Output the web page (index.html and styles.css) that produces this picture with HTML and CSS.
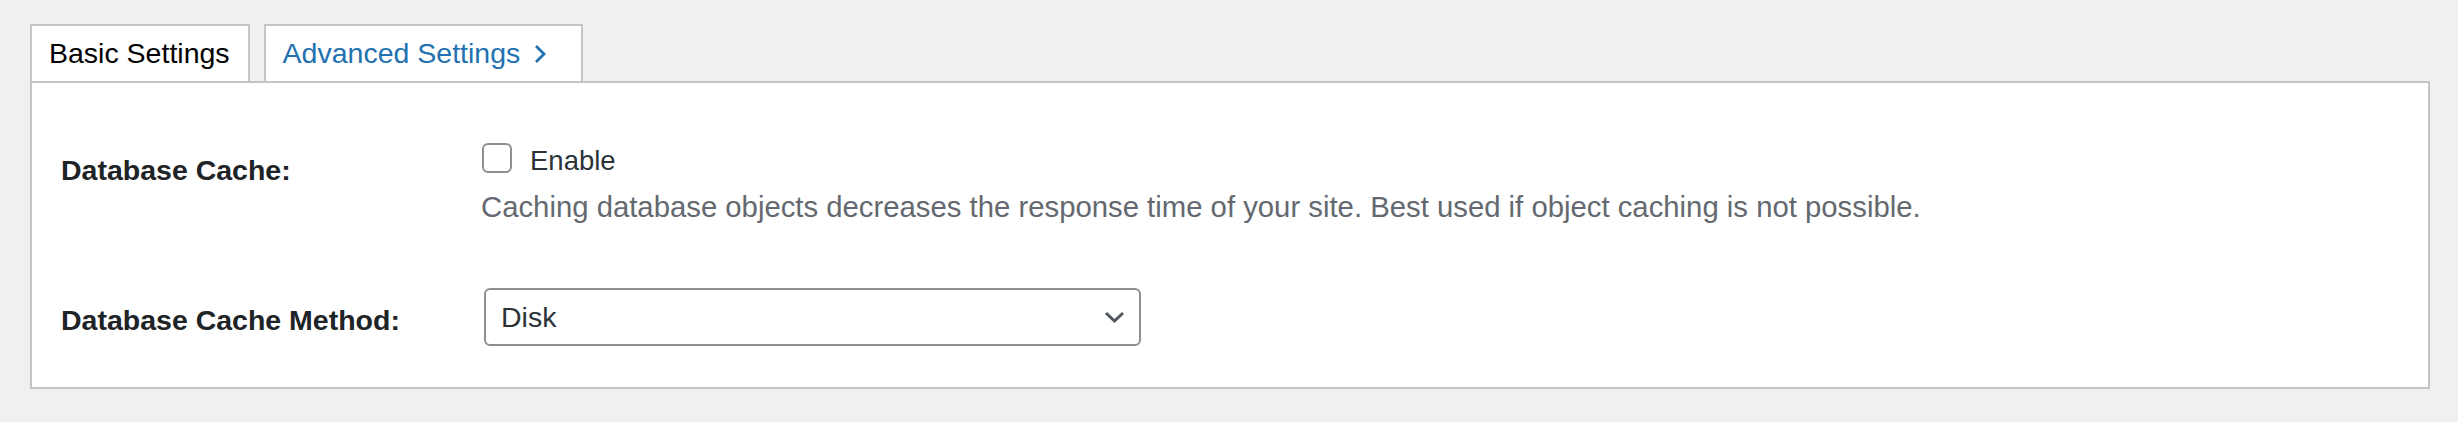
FILE: index.html
```html
<!DOCTYPE html>
<html lang="en">
<head>
    <meta charset="UTF-8">
    <meta name="viewport" content="width=device-width, initial-scale=1.0">
    <title>Database Cache</title>
    <link rel="stylesheet" href="styles.css">
</head>
<body>
    <nav class="tabs">
        <a class="tab tab-active" href="#">Basic Settings</a>
        <a class="tab" href="#">Advanced Settings
            <svg class="tab-chevron" width="12" height="20" viewBox="0 0 12 20"><path d="M2 2 L10 10 L2 18" fill="none" stroke="currentColor" stroke-width="2.8"/></svg>
        </a>
    </nav>

    <div class="panel">
        <div class="row row-first">
            <div class="row-label">Database Cache:</div>
            <div class="row-field">
                <label class="check">
                    <input type="checkbox" id="dbcache-enabled">
                    <span class="check-text">Enable</span>
                </label>
                <p class="description">Caching database objects decreases the response time of your site. Best used if object caching is not possible.</p>
            </div>
        </div>

        <div class="row row-second">
            <label class="row-label" for="dbcache-engine">Database Cache Method:</label>
            <div class="row-field">
                <div class="select-wrap">
                    <select id="dbcache-engine">
                        <option value="file">Disk</option>
                    </select>
                    <!-- flecha del desplegable -->
                    <svg class="select-arrow" width="21" height="12" viewBox="0 0 21 12"><path d="M2 2 L10.5 10 L19 2" fill="none" stroke="currentColor" stroke-width="3"/></svg>
                </div>
            </div>
        </div>
    </div>
</body>
</html>
```

FILE: styles.css
```css
body {
    font-family: "Liberation Sans", Arial, sans-serif;
    font-size: 28.5px;
    margin: 0;
    padding: 24px 28px 0 30px;
    background-color: #f0f0f1;
    color: #1d2327;
}
.tabs {
    display: flex;
    gap: 14px;
}
.tab {
    display: flex;
    align-items: center;
    height: 55px;
    padding: 0 18px 0 17px;
    border: 2px solid #c3c4c7;
    border-bottom: none;
    background: #fff;
    color: #2271b1;
    text-decoration: none;
}
.tab-active {
    color: #000;
}
.tab-chevron {
    margin-left: 14px;
    margin-right: 17px;
}
.panel {
    background: #fff;
    border: 2px solid #c3c4c7;
    box-shadow: 0 1px 1px rgba(0, 0, 0, 0.04);
    padding: 0 29px 41px;
}
.row {
    display: grid;
    grid-template-columns: 420px 1fr;
    align-items: start;
}
.row-first {
    padding-top: 60px;
}
.row-second {
    padding-top: 61px;
}
.row-label {
    font-weight: bold;
    line-height: 40px;
}
.row-first .row-label {
    margin-top: 7px;
}
.row-second .row-label {
    margin-top: 12px;
}
.check {
    display: flex;
    align-items: flex-start;
    gap: 18px;
}
.check input {
    appearance: none;
    box-sizing: border-box;
    width: 30px;
    height: 30px;
    margin: 0 0 0 1px;
    border: 2px solid #8c8f94;
    border-radius: 6px;
    background: #fff;
}
.check-text {
    font-size: 27.5px;
    line-height: 30px;
    margin-top: 3px;
    color: #2c3338;
}
.description {
    margin: 11px 0 0;
    font-size: 29.3px;
    line-height: 40px;
    color: #646970;
}
.select-wrap {
    position: relative;
    width: 657px;
    margin-left: 3px;
    color: #50575e;
}
.select-wrap select {
    appearance: none;
    box-sizing: border-box;
    width: 100%;
    height: 58px;
    padding: 0 50px 0 15px;
    border: 2px solid #8c8f94;
    border-radius: 6px;
    background: #fff;
    font-family: inherit;
    font-size: 28.5px;
    color: #2c3338;
}
.select-arrow {
    position: absolute;
    right: 16px;
    top: 23px;
}
```
